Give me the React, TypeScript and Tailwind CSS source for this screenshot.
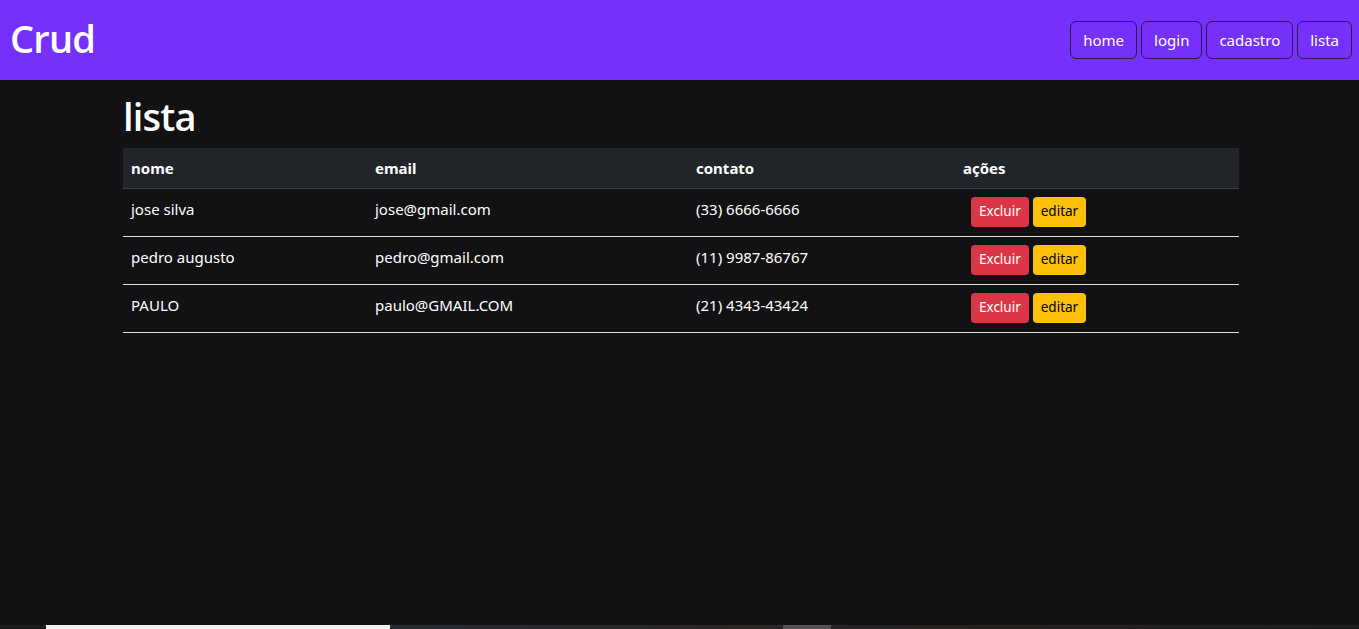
import React from 'react';

type Pessoa = { nome: string; email: string; contato: string };

const pessoas: Pessoa[] = [
  { nome: 'jose silva', email: 'jose@gmail.com', contato: '(33) 6666-6666' },
  { nome: 'pedro augusto', email: 'pedro@gmail.com', contato: '(11) 9987-86767' },
  { nome: 'PAULO', email: 'paulo@GMAIL.COM', contato: '(21) 4343-43424' },
];

const links = ['home', 'login', 'cadastro', 'lista'];

const App: React.FC = () => {
  return (
    <div className="min-h-[629px] h-[629px] flex flex-col bg-[#121214] text-white font-['Noto_Sans','Open_Sans',sans-serif] overflow-hidden">
      <nav className="h-20 shrink-0 bg-[#7530fc] flex items-center justify-between pl-[10px] pr-[7px]">
        <h1 className="font-['Open_Sans',sans-serif] text-[38px] leading-none font-semibold tracking-[-0.8px] pb-1">Crud</h1>
        <div className="flex gap-1">
          {links.map((l) => (
            <button
              key={l}
              className="h-[38px] px-3 rounded-md border border-[#2a1c52] text-[15px] text-white"
            >
              {l}
            </button>
          ))}
        </div>
      </nav>

      <main className="flex-1 w-[1116px] ml-[123px]">
        <h1 className="font-['Open_Sans',sans-serif] text-[38px] leading-[48px] font-semibold mt-[12px] mb-[8px] tracking-[-0.8px]">lista</h1>
        <table className="w-full border-collapse text-[15px] table-fixed">
          <colgroup>
            <col className="w-[244px]" />
            <col className="w-[321px]" />
            <col className="w-[267px]" />
            <col />
          </colgroup>
          <thead>
            <tr className="bg-[#212529] border-b border-[#3b3e43]">
              <th className="h-10 px-2 text-left font-bold">nome</th>
              <th className="h-10 px-2 text-left font-bold">email</th>
              <th className="h-10 px-2 text-left font-bold">contato</th>
              <th className="h-10 px-2 text-left font-bold">ações</th>
            </tr>
          </thead>
          <tbody>
            {pessoas.map((p) => (
              <tr key={p.email} className="border-b border-[#dee2e6]">
                <td className="px-2 pt-2 pb-2 align-top leading-6">{p.nome}</td>
                <td className="px-2 pt-2 pb-2 align-top leading-6">{p.email}</td>
                <td className="px-2 pt-2 pb-2 align-top leading-6">{p.contato}</td>
                <td className="px-2 pt-2 pb-[9px] align-top">
                  <div className="flex gap-1 ml-2">
                    <button className="h-[30px] px-2 rounded-[4px] bg-[#dc3545] text-white text-[13.5px]">Excluir</button>
                    <button className="h-[30px] px-2 rounded-[4px] bg-[#ffc107] text-black text-[13.5px]">editar</button>
                  </div>
                </td>
              </tr>
            ))}
          </tbody>
        </table>
      </main>

      <div className="h-1 shrink-0 flex bg-[#1c1c1e]">
        <div className="w-[46px]" />
        <div className="w-[344px] bg-[#f0f0f0]" />
        <div className="w-[393px] bg-gradient-to-r from-[#262a33] to-[#2c2522]" />
        <div className="w-[48px] bg-[#57504d]" />
        <div className="flex-1 bg-gradient-to-r from-[#2a2320] to-[#1e1e1e]" />
      </div>
    </div>
  );
};

export default App;
